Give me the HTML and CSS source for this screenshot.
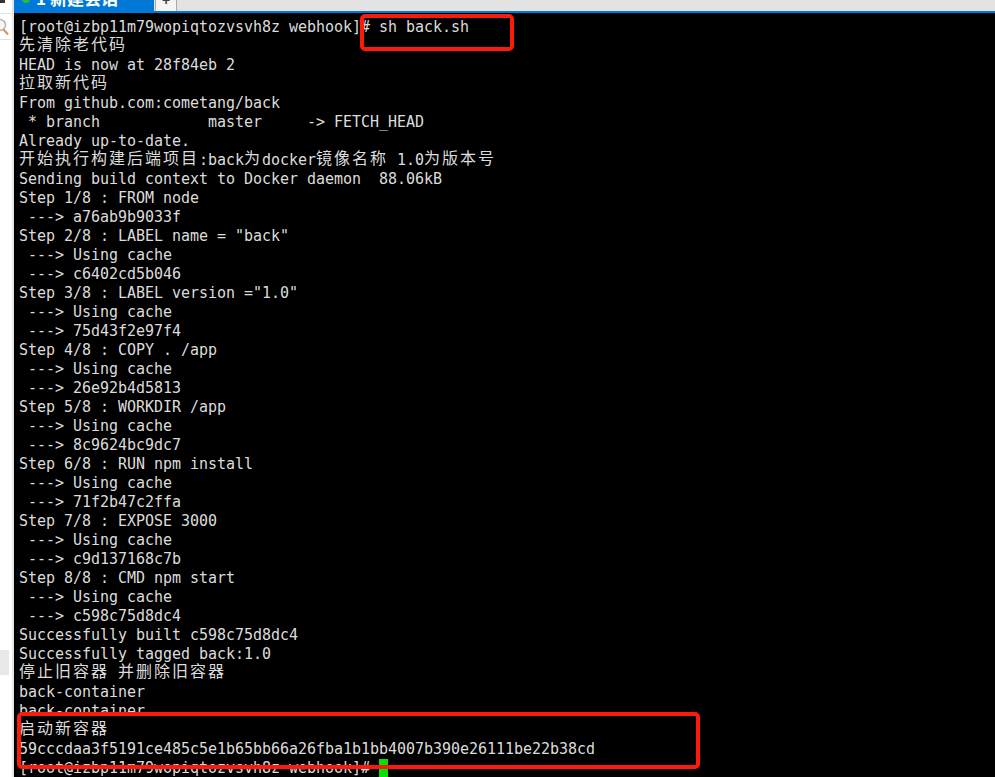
FILE: index.html
```html
<!DOCTYPE html>
<html lang="zh">
<head>
<meta charset="utf-8">
<title>Terminal</title>
<link rel="stylesheet" href="styles.css">
</head>
<body>
<div class="app">
  <aside class="side">
    <div class="side-corner"></div>
    <div class="side-search"><svg class="mag" width="9" height="20" viewBox="0 0 9 20"><circle cx="0" cy="7" r="5.5" fill="#f6f6f6" stroke="#b5b5b5" stroke-width="1.5"/><path d="M3.5 11.5l4.5 5" stroke="#d29a62" stroke-width="2.2"/></svg></div>
    <div class="side-panel"></div>
  </aside>
  <main class="main">
    <div class="tabs">
      <div class="tab"><span class="dot"></span><span class="tab-text">1 新建会话</span></div>
      <div class="tab-add">+</div>
    </div>
    <div class="term"><div class="line">[root@izbp11m79wopiqtozvsvh8z webhook]# sh back.sh</div>
<div class="line"><span class="cjk">先清除老代码</span></div>
<div class="line">HEAD is now at 28f84eb 2</div>
<div class="line"><span class="cjk">拉取新代码</span></div>
<div class="line">From github.com:cometang/back</div>
<div class="line"> * branch            master     -&gt; FETCH_HEAD</div>
<div class="line">Already up-to-date.</div>
<div class="line"><span class="cjk">开始执行构建后端项目</span>:back<span class="cjk">为</span>docker<span class="cjk">镜像名称</span> 1.0<span class="cjk">为版本号</span></div>
<div class="line">Sending build context to Docker daemon  88.06kB</div>
<div class="line">Step 1/8 : FROM node</div>
<div class="line"> ---&gt; a76ab9b9033f</div>
<div class="line">Step 2/8 : LABEL name = "back"</div>
<div class="line"> ---&gt; Using cache</div>
<div class="line"> ---&gt; c6402cd5b046</div>
<div class="line">Step 3/8 : LABEL version ="1.0"</div>
<div class="line"> ---&gt; Using cache</div>
<div class="line"> ---&gt; 75d43f2e97f4</div>
<div class="line">Step 4/8 : COPY . /app</div>
<div class="line"> ---&gt; Using cache</div>
<div class="line"> ---&gt; 26e92b4d5813</div>
<div class="line">Step 5/8 : WORKDIR /app</div>
<div class="line"> ---&gt; Using cache</div>
<div class="line"> ---&gt; 8c9624bc9dc7</div>
<div class="line">Step 6/8 : RUN npm install</div>
<div class="line"> ---&gt; Using cache</div>
<div class="line"> ---&gt; 71f2b47c2ffa</div>
<div class="line">Step 7/8 : EXPOSE 3000</div>
<div class="line"> ---&gt; Using cache</div>
<div class="line"> ---&gt; c9d137168c7b</div>
<div class="line">Step 8/8 : CMD npm start</div>
<div class="line"> ---&gt; Using cache</div>
<div class="line"> ---&gt; c598c75d8dc4</div>
<div class="line">Successfully built c598c75d8dc4</div>
<div class="line">Successfully tagged back:1.0</div>
<div class="line"><span class="cjk">停止旧容器</span> <span class="cjk">并删除旧容器</span></div>
<div class="line">back-container</div>
<div class="line">back-container</div>
<div class="line"><span class="cjk">启动新容器</span></div>
<div class="line">59cccdaa3f5191ce485c5e1b65bb66a26fba1b1bb4007b390e26111be22b38cd</div>
<div class="line">[root@izbp11m79wopiqtozvsvh8z webhook]# <span class="cursor"></span></div></div>
    <div class="mark mark-a"></div>
    <div class="mark mark-b"></div>
  </main>
</div>
</body>
</html>
```
FILE: styles.css
```css
html, body { margin: 0; padding: 0; height: 100%; overflow: hidden; background: #000; }
.app { display: flex; height: 777px; width: 995px; }
.side { width: 14px; background: #fff; border-right: 2px solid #e6e6e6; box-sizing: border-box; display: flex; flex-direction: column; flex: none; }
.side-corner { width: 5px; height: 3px; background: #333; }
.side-search { margin-top: 10px; height: 27px; width: 11px; box-sizing: border-box; border-top: 1px solid #e2e2e2; border-bottom: 1px solid #e2e2e2; }
.mag { display: block; margin-top: 4px; }
.side-panel { margin-top: 610px; width: 9px; height: 25px; background: #e8e8e8; }
.main { position: relative; flex: 1; display: flex; flex-direction: column; min-width: 0; }
.tabs { height: 11px; background: #e3e3e3; display: flex; overflow: hidden; flex: none; }
.tab { width: 140px; background: #0078d7; display: flex; align-items: flex-start; height: 11px; flex: none; overflow: hidden; }
.dot { width: 8px; height: 8px; margin-top: -5px; background: #1fc23a; border-radius: 50%; margin-left: 8px; flex: none; }
.tab-text { font: 700 17px/17px "Noto Sans CJK SC", sans-serif; color: #fff; margin-left: 6px; margin-top: -11px; white-space: nowrap; }
.tab-add { width: 20px; margin-left: 1px; background: #f4f4f4; border-left: 1px solid #aaa; border-right: 1px solid #aaa; font: 700 14px/0 "Liberation Sans", sans-serif; color: #444; text-align: center; }
.term { flex: 1; background: #000; border-top: 2px solid #0078d7; padding: 5px 0 0 5px; color: #dcdcdc; font: 15px/19px "DejaVu Sans Mono", "Noto Sans CJK SC", monospace; overflow: hidden; }
.line { height: 19px; white-space: pre; letter-spacing: -0.03px; }
.cjk { font-family: "Noto Sans CJK SC", sans-serif; font-size: 16px; letter-spacing: 2px; line-height: 12px; vertical-align: 1px; }
.cursor { display: inline-block; width: 9px; height: 19px; background: #00e400; vertical-align: top; }
.mark { position: absolute; border: 4px solid #fb1a0c; border-radius: 5px; box-sizing: border-box; }
.mark-a { left: 346px; top: 14px; width: 154px; height: 37px; }
.mark-b { left: 3px; top: 712px; width: 683px; height: 57px; }
```
